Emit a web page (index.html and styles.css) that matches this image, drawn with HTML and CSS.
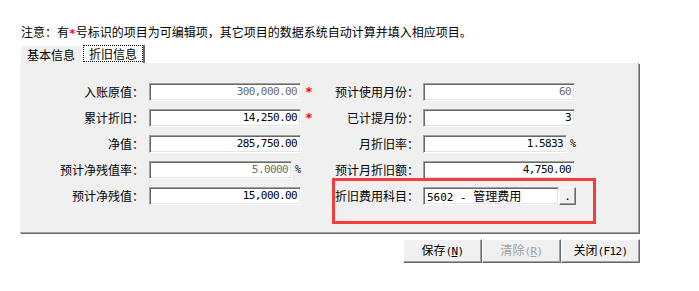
FILE: index.html
```html
<!DOCTYPE html>
<html lang="zh-CN">
<head>
<meta charset="utf-8">
<title>折旧信息</title>
<link rel="stylesheet" href="styles.css">
</head>
<body>
<div class="page">
  <p class="notice">注意：有<span class="req">*</span>号标识的项目为可编辑项，其它项目的数据系统自动计算并填入相应项目。</p>
  <div class="tabs">
    <span class="tab">基本信息</span>
    <span class="tab tab-active"><span class="focus">折旧信息</span></span>
  </div>
  <div class="panel">
    <div class="grid">
      <label class="lbl">入账原值：</label>
      <div class="cell"><div class="field w152 dim">300,000.00</div><span class="star">*</span></div>
      <label class="lbl lbl2">预计使用月份：</label>
      <div class="cell"><div class="field w152 dim">60</div></div>

      <label class="lbl">累计折旧：</label>
      <div class="cell"><div class="field w152">14,250.00</div><span class="star">*</span></div>
      <label class="lbl lbl2">已计提月份：</label>
      <div class="cell"><div class="field w152">3</div></div>

      <label class="lbl">净值：</label>
      <div class="cell"><div class="field w152">285,750.00</div></div>
      <label class="lbl lbl2">月折旧率：</label>
      <div class="cell"><div class="field w144">1.5833</div><span class="pct">%</span></div>

      <label class="lbl">预计净残值率：</label>
      <div class="cell"><div class="field w143 dim">5.0000</div><span class="pct">%</span></div>
      <label class="lbl lbl2">预计月折旧额：</label>
      <div class="cell"><div class="field w152">4,750.00</div></div>

      <label class="lbl">预计净残值：</label>
      <div class="cell"><div class="field w152">15,000.00</div></div>
      <label class="lbl lbl2">折旧费用科目：</label>
      <div class="cell"><div class="field w136 text">5602 - <span class="cjk">管理费用</span></div><span class="pick">.</span></div>
    </div>
    <div class="highlight"></div>
  </div>
  <div class="actions">
    <button class="btn" type="button">保存<span class="key">(<u>N</u>)</span></button>
    <button class="btn btn-disabled" type="button">清除<span class="key">(<u>R</u>)</span></button>
    <button class="btn" type="button">关闭<span class="key">(F12)</span></button>
  </div>
</div>
</body>
</html>
```

FILE: styles.css
```css
html, body {
  margin: 0;
  padding: 0;
  background: #ffffff;
}

body {
  font-family: "Noto Sans CJK SC", "Noto Sans", sans-serif;
  font-size: 12px;
  color: #000000;
}

.page {
  padding: 25px 0 0 20px;
  width: 620px;
}

.notice {
  margin: 0 0 0 1px;
  height: 14px;
  line-height: 14px;
  white-space: nowrap;
}

.req {
  color: #ff0000;
  font-family: "DejaVu Sans Mono", monospace;
  font-size: 11px;
  font-weight: bold;
}

.tabs {
  display: flex;
  align-items: flex-end;
  margin-top: 6px;
  height: 18px;
}

.tab {
  height: 17px;
  line-height: 17px;
  padding: 0 6px;
  margin-left: 1px;
  background: #f0f0f0;
  box-sizing: border-box;
}

.tab-active {
  margin-left: 2px;
  padding: 0;
  height: 18px;
  background: #ffffff;
  border-right: 2px solid #696969;
  display: flex;
}

.focus {
  display: block;
  height: 17px;
  line-height: 15px;
  padding: 0 5px;
  border: 1px dotted #000000;
  box-sizing: border-box;
}

.panel {
  position: relative;
  height: 170px;
  box-sizing: border-box;
  background: #f0f0f0;
  border-right: 1px solid #a0a0a0;
  border-bottom: 1px solid #a0a0a0;
  box-shadow: 1px 1px 0 #696969;
  width: 619px;
  padding-top: 20px;
}

.grid {
  display: grid;
  grid-template-columns: 129px 176px 98px 1fr;
  grid-auto-rows: 18px;
  row-gap: 8px;
}

.lbl {
  text-align: right;
  padding-right: 5px;
  line-height: 18px;
  white-space: nowrap;
}

.lbl2 {
  padding-right: 4px;
}

.cell {
  display: flex;
  align-items: center;
}

.field {
  height: 18px;
  box-sizing: border-box;
  border: 1px solid;
  border-color: #a0a0a0 #ffffff #ffffff #a0a0a0;
  box-shadow: inset 1px 1px 0 #696969, inset -1px -1px 0 #e3e3e3;
  background: #ffffff;
  text-align: right;
  padding: 0 3px 0 3px;
  font-family: "DejaVu Sans Mono", monospace;
  font-size: 11px;
  letter-spacing: -0.6px;
  line-height: 16px;
  white-space: nowrap;
  overflow: hidden;
}

.dim {
  color: #6d6d6d;
}

.text {
  text-align: left;
  padding-left: 3px;
  letter-spacing: 0;
  font-family: "DejaVu Sans Mono", "Noto Sans CJK SC", monospace;
}

.cjk {
  font-family: "Noto Sans CJK SC", sans-serif;
  font-size: 12px;
}

.w152 { width: 152px; }
.w144 { width: 144px; }
.w143 { width: 143px; }
.w136 { width: 136px; }

.star {
  color: #ff0000;
  margin-left: 4px;
  font-family: "DejaVu Sans Mono", monospace;
  font-size: 13px;
  font-weight: bold;
  line-height: 18px;
}

.pct {
  margin-left: 3px;
  font-family: "DejaVu Sans Mono", monospace;
  font-size: 10px;
  line-height: 18px;
}

.pick {
  width: 17px;
  height: 18px;
  box-sizing: border-box;
  background: #f0f0f0;
  border: 1px solid;
  border-color: #ffffff #696969 #696969 #ffffff;
  box-shadow: inset -1px -1px 0 #a0a0a0;
  text-align: center;
  line-height: 18px;
  font-family: "DejaVu Sans Mono", monospace;
  font-size: 11px;
}

.highlight {
  position: absolute;
  left: 312px;
  top: 115px;
  width: 264px;
  height: 46px;
  box-sizing: border-box;
  border: 3px solid #f43c3c;
  pointer-events: none;
}

.actions {
  display: flex;
  justify-content: flex-end;
  margin-top: 6px;
}

.btn {
  width: 79px;
  height: 24px;
  margin: 0;
  padding: 0;
  box-sizing: border-box;
  background: #f0f0f0;
  border: 1px solid;
  border-color: #ffffff #696969 #696969 #ffffff;
  box-shadow: inset -1px -1px 0 #a0a0a0;
  font-family: "Noto Sans CJK SC", sans-serif;
  font-size: 12px;
  color: #000000;
  line-height: 20px;
}

.btn-disabled {
  color: #a0a0a0;
}

.key {
  font-family: "DejaVu Sans Mono", monospace;
  font-size: 11px;
  letter-spacing: -0.6px;
}
```
